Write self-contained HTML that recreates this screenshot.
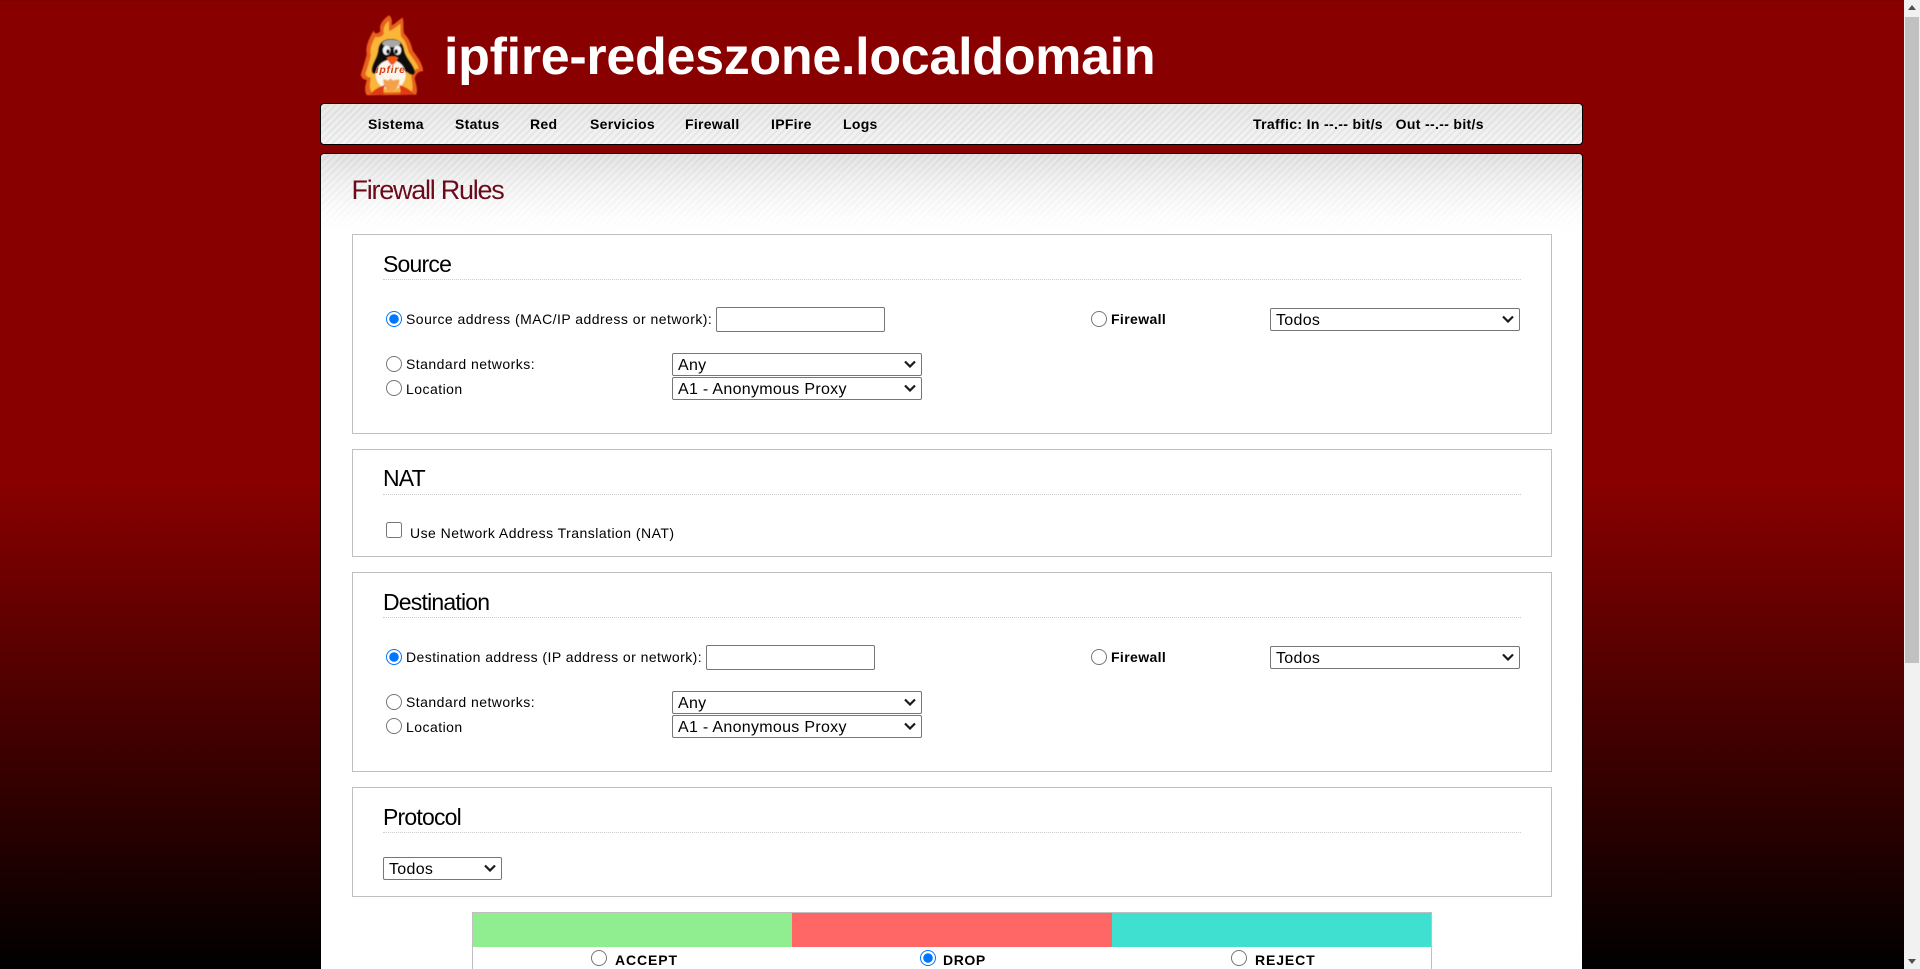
<!DOCTYPE html>
<html lang="en"><head><meta charset="utf-8"><title>Firewall Rules</title>
<style>
html,body{margin:0;padding:0;width:1920px;height:969px;overflow:hidden}
body{position:relative;background:linear-gradient(#880000 0,#880000 484px,#000 969px);font-family:"Liberation Sans",Arial,sans-serif;font-size:14px;color:#000}
.a,.t,input,select{position:absolute;margin:0;box-sizing:border-box}
.t{white-space:nowrap;height:20px;line-height:20px;font-size:14px;letter-spacing:.47px}
.b{font-weight:bold;letter-spacing:.38px}
.bar{position:absolute;left:320px;width:1263px;border:1px solid #000;border-radius:4px;box-sizing:border-box}
#nav{top:103px;height:42px;background:repeating-linear-gradient(135deg,rgba(205,205,205,.28) 0 2px,rgba(255,255,255,.15) 2px 5px),linear-gradient(#e4e4e4,#f3f3f3)}
#main{top:153px;height:830px;background:#fff}
#fade{position:absolute;left:321px;top:154px;width:1261px;height:80px;border-radius:3px 3px 0 0;background:repeating-linear-gradient(135deg,rgba(190,190,190,.22) 0 2px,rgba(255,255,255,.1) 2px 5px),linear-gradient(#e0e0e0,#fff)}
#fademask{position:absolute;left:321px;top:154px;width:1261px;height:80px;background:linear-gradient(rgba(255,255,255,0) 0,rgba(255,255,255,.45) 50%,#fff 100%)}
.sec{position:absolute;left:352px;width:1200px;border:1px solid #c0c0c0;background:#fff;box-sizing:border-box}
.h{position:absolute;left:383px;height:30px;line-height:30px;font-size:23px;letter-spacing:-.8px;white-space:nowrap}
.dot{position:absolute;left:383px;width:1138px;height:0;border-top:1px dotted #ccc}
input[type=radio],input[type=checkbox]{width:16px;height:16px;left:0;top:0}
select{font-family:"Liberation Sans",Arial,sans-serif;font-size:16px;letter-spacing:.3px;height:23px;background:#fff;color:#000;border:1px solid #767676;border-radius:2px;padding:2px 0 0 5px;appearance:none;-webkit-appearance:none;line-height:20px}
input[type=text]{border:1px solid #767676;border-radius:2px;background:#fff;width:169px;height:25px}
#title{position:absolute;left:444px;top:25px;color:#fff;font-weight:bold;font-size:52px;line-height:64px;white-space:nowrap;letter-spacing:-.29px}
#pt{position:absolute;left:351.5px;top:173px;height:34px;line-height:34px;font-size:27px;letter-spacing:-1.25px;color:#6b0a1a;white-space:nowrap}
.c{position:absolute;top:913px;height:34px}
.cv{position:absolute;width:12px;height:8px;fill:none;stroke:#1a1a1a;stroke-width:2.2}
#sb{position:absolute;left:1904px;top:0;width:16px;height:969px;background:#f1f1f1}
#th{position:absolute;left:1px;top:17px;width:14px;height:646px;background:#c1c1c1}
</style></head><body>

<svg class="a" style="left:353px;top:10px" width="74" height="88" viewBox="0 0 216 258">
<defs><filter id="bl"><feGaussianBlur stdDeviation="1.8"/></filter></defs>
<g filter="url(#bl)">
<path fill="#e8601a" d="M105 15C115 25 115 35 112 45C125 40 135 28 145 22C150 40 145 55 150 70C165 85 170 100 175 120C190 140 205 160 205 180C195 178 185 185 180 200C185 220 190 235 185 248L40 250C30 235 38 215 40 205C30 205 25 200 22 190C28 170 35 150 40 130C35 110 45 85 60 60C62 70 70 72 80 62C75 45 85 30 105 15z"/>
<path fill="#f9b637" d="M104 32C106 42 104 52 106 62C120 55 130 48 138 40C140 55 137 68 142 80C155 92 158 108 163 125C175 142 190 160 192 172C182 172 174 180 170 195C174 215 176 230 172 240L55 242C45 228 50 212 52 198C44 198 38 194 36 186C42 170 48 150 52 132C48 115 55 95 66 78C72 82 82 80 90 70C87 55 92 42 104 32z"/>
<path fill="#111" d="M112 85C90 85 75 95 73 120C70 140 60 150 55 170C52 188 62 192 72 180L158 182C168 192 186 196 180 175C172 155 155 140 150 120C148 100 135 85 112 85z"/>
<ellipse cx="112" cy="98" rx="26" ry="11" fill="#a8a8a8"/>
<circle cx="110" cy="190" r="44" fill="#fbf5ea"/>
<path fill="#f4a24a" d="M88 205C95 198 100 215 110 200C118 214 128 198 136 206C134 225 124 238 110 238C96 238 90 222 88 205z"/>
<path fill="#e03b18" d="M50 247C62 232 78 224 94 220C88 232 88 242 92 250zM178 247C166 232 150 224 134 220C140 232 140 242 136 250z"/>
<ellipse cx="98" cy="118" rx="11" ry="14" fill="#f4f4f4"/>
<ellipse cx="130" cy="118" rx="11" ry="14" fill="#f4f4f4"/>
<ellipse cx="102" cy="122" rx="5" ry="7" fill="#111"/>
<ellipse cx="126" cy="122" rx="5" ry="7" fill="#111"/>
<path fill="#ee5a14" d="M98 140C108 134 124 134 132 140C128 150 120 160 114 162C108 158 102 150 98 140z"/>
</g>
<text x="110" y="185" text-anchor="middle" font-family="Liberation Sans" font-weight="bold" font-style="italic" font-size="31" letter-spacing="2" fill="#d8431a">ipfire</text>
</svg>
<div id="title">ipfire-redeszone.localdomain</div>

<div id="nav" class="bar"></div>
<div class="t b" style="left:368px;top:114px;letter-spacing:.3px">Sistema</div>
<div class="t b" style="left:455px;top:114px;letter-spacing:.3px">Status</div>
<div class="t b" style="left:530px;top:114px;letter-spacing:.3px">Red</div>
<div class="t b" style="left:590px;top:114px;letter-spacing:.3px">Servicios</div>
<div class="t b" style="left:685px;top:114px;letter-spacing:.3px">Firewall</div>
<div class="t b" style="left:771px;top:114px;letter-spacing:.3px">IPFire</div>
<div class="t b" style="left:843px;top:114px;letter-spacing:.3px">Logs</div>
<div class="t b" style="left:1253px;top:114px;white-space:pre;letter-spacing:.34px">Traffic: In --.-- bit/s   Out --.-- bit/s</div>

<div id="main" class="bar"></div>
<div id="fade"></div><div id="fademask"></div>
<div id="pt">Firewall Rules</div>

<div class="sec" style="top:234px;height:200px"></div>
<div class="h" style="top:249px">Source</div><div class="dot" style="top:279px"></div>
<input class="a" type="radio" name="s" checked style="left:386px;top:311px">
<div class="t" style="left:406px;top:309px">Source address (MAC/IP address or network):</div>
<input type="text" style="left:716px;top:307px">
<input class="a" type="radio" name="s" style="left:386px;top:356px">
<div class="t" style="left:406px;top:354px">Standard networks:</div>
<select style="left:672px;top:353px;width:250px"><option>Any</option></select>
<svg class="cv" style="left:904px;top:360px" viewBox="0 0 12 8"><path d="M1 1.5l5 5 5-5"/></svg>
<input class="a" type="radio" name="s" style="left:386px;top:380px">
<div class="t" style="left:406px;top:379px">Location</div>
<select style="left:672px;top:377px;width:250px"><option>A1 - Anonymous Proxy</option></select>
<svg class="cv" style="left:904px;top:384px" viewBox="0 0 12 8"><path d="M1 1.5l5 5 5-5"/></svg>
<input class="a" type="radio" name="s" style="left:1091px;top:311px">
<div class="t b" style="left:1111px;top:309px">Firewall</div>
<select style="left:1270px;top:308px;width:250px"><option>Todos</option></select>
<svg class="cv" style="left:1502px;top:315px" viewBox="0 0 12 8"><path d="M1 1.5l5 5 5-5"/></svg>

<div class="sec" style="top:449px;height:108px"></div>
<div class="h" style="top:463px">NAT</div><div class="dot" style="top:494px"></div>
<input class="a" type="checkbox" style="left:386px;top:522px">
<div class="t" style="left:410px;top:523px">Use Network Address Translation (NAT)</div>

<div class="sec" style="top:572px;height:200px"></div>
<div class="h" style="top:587px">Destination</div><div class="dot" style="top:617px"></div>
<input class="a" type="radio" name="d" checked style="left:386px;top:649px">
<div class="t" style="left:406px;top:647px;letter-spacing:.44px">Destination address (IP address or network):</div>
<input type="text" style="left:706px;top:645px">
<input class="a" type="radio" name="d" style="left:386px;top:694px">
<div class="t" style="left:406px;top:692px">Standard networks:</div>
<select style="left:672px;top:691px;width:250px"><option>Any</option></select>
<svg class="cv" style="left:904px;top:698px" viewBox="0 0 12 8"><path d="M1 1.5l5 5 5-5"/></svg>
<input class="a" type="radio" name="d" style="left:386px;top:718px">
<div class="t" style="left:406px;top:717px">Location</div>
<select style="left:672px;top:715px;width:250px"><option>A1 - Anonymous Proxy</option></select>
<svg class="cv" style="left:904px;top:722px" viewBox="0 0 12 8"><path d="M1 1.5l5 5 5-5"/></svg>
<input class="a" type="radio" name="d" style="left:1091px;top:649px">
<div class="t b" style="left:1111px;top:647px">Firewall</div>
<select style="left:1270px;top:646px;width:250px"><option>Todos</option></select>
<svg class="cv" style="left:1502px;top:653px" viewBox="0 0 12 8"><path d="M1 1.5l5 5 5-5"/></svg>

<div class="sec" style="top:787px;height:110px"></div>
<div class="h" style="top:802px">Protocol</div><div class="dot" style="top:832px"></div>
<select style="left:383px;top:857px;width:119px"><option>Todos</option></select>
<svg class="cv" style="left:484px;top:864px" viewBox="0 0 12 8"><path d="M1 1.5l5 5 5-5"/></svg>

<div class="a" style="left:472px;top:912px;width:960px;height:70px;border:1px solid #c0c0c0;box-sizing:border-box;background:#fff"></div>
<div class="c" style="left:473px;width:319px;background:#90ee90"></div>
<div class="c" style="left:792px;width:320px;background:#ff6666"></div>
<div class="c" style="left:1112px;width:319px;background:#40e0d0"></div>
<input class="a" type="radio" name="p" style="left:591px;top:950px">
<div class="t b" style="left:615px;top:950px;letter-spacing:.9px">ACCEPT</div>
<input class="a" type="radio" name="p" checked style="left:920px;top:950px">
<div class="t b" style="left:943px;top:950px;letter-spacing:.6px">DROP</div>
<input class="a" type="radio" name="p" style="left:1231px;top:950px">
<div class="t b" style="left:1255px;top:950px;letter-spacing:.9px">REJECT</div>

<div id="sb"><div id="th"></div>
<svg class="a" style="left:0;top:0" width="16" height="17"><path d="M8 5l4 5H4z" fill="#505050"/></svg>
<svg class="a" style="left:0;top:952px" width="16" height="17"><path d="M8 12l4-5H4z" fill="#505050"/></svg>
</div>
</body></html>
